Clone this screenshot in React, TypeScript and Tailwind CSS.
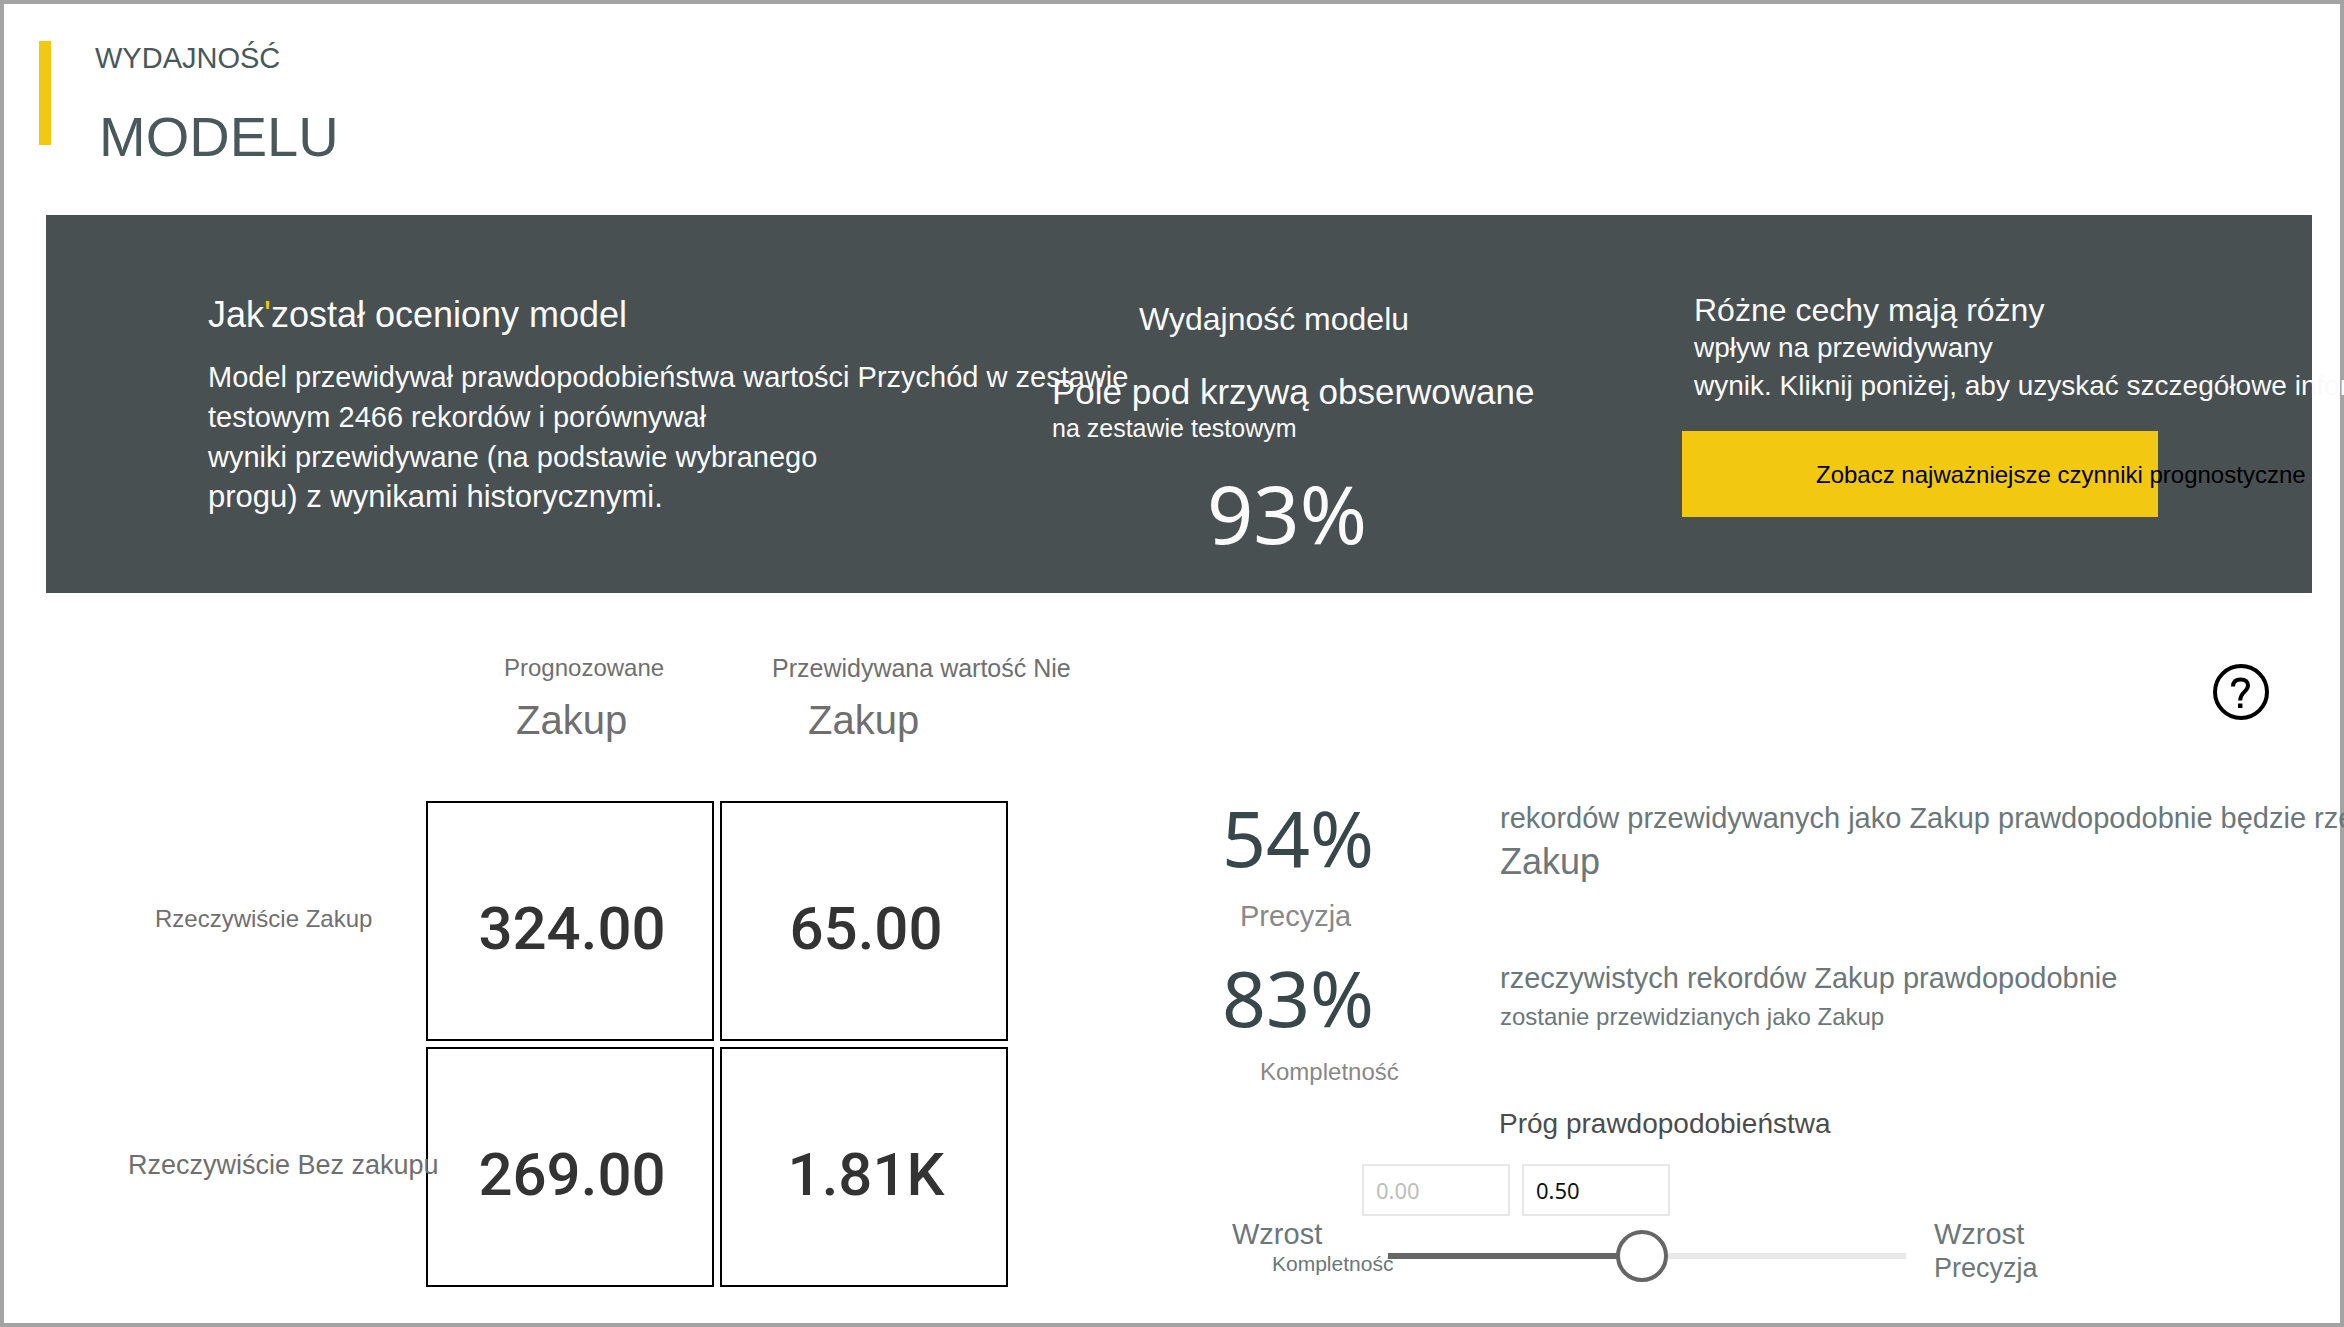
import { useState } from "react";

const matrix = [
  {
    label: "Rzeczywiście Zakup",
    labelClass: "pl-[103px] text-[24px]",
    values: ["324.00", "65.00"],
  },
  {
    label: "Rzeczywiście Bez zakupu",
    labelClass: "pl-[76px] text-[27px]",
    values: ["269.00", "1.81K"],
  },
];

function Header() {
  return (
    <header className="flex gap-11 pt-[37px] pl-[35px] text-[#48585b]">
      <div className="h-[104px] w-3 shrink-0 bg-[#f2c811]" />
      <h1>
        <span className="block text-[29px] leading-[34px]">WYDAJNOŚĆ</span>
        <span className="mt-[30px] block pl-1 text-[56px] leading-[64px]">MODELU</span>
      </h1>
    </header>
  );
}

function Banner() {
  return (
    <section className="mt-[46px] mr-7 ml-[42px] grid min-h-[378px] grid-cols-[minmax(0,1006fr)_minmax(0,630fr)_minmax(0,630fr)] bg-[#485052] whitespace-nowrap text-[#fafafa]">
      <div className="pt-[76px] pl-[162px]">
        <h2 className="text-[36px] leading-[48px]">
          Jak<span className="text-[#f2c811]">'</span>został oceniony model
        </h2>
        <p className="mt-[18px] text-[29px] leading-[40px]">
          Model przewidywał prawdopodobieństwa wartości Przychód w zestawie
          <br />
          testowym 2466 rekordów i porównywał
          <br />
          wyniki przewidywane (na podstawie wybranego
          <span className="block text-[31px]">progu) z wynikami historycznymi.</span>
        </p>
      </div>

      <div className="pt-20">
        <h2 className="pl-[87px] text-[32px] leading-[48px]">Wydajność modelu</h2>
        <p className="mt-[27px] text-[35px] leading-[44px]">Pole pod krzywą obserwowane</p>
        <p className="text-[25px] leading-[28px]">na zestawie testowym</p>
        <p className="mt-[31px] pl-[155px] font-['Noto_Sans',sans-serif] text-[81px] leading-[80px]">93%</p>
      </div>

      <div className="pt-[76px]">
        <p className="pl-3 text-[28px] leading-[38px]">
          <span className="block text-[32px]">Różne cechy mają różny</span>
          <span className="block">wpływ na przewidywany</span>
          wynik. Kliknij poniżej, aby uzyskać szczegółowe informacje
        </p>
        <button
          type="button"
          className="mt-[26px] block h-[86px] w-[476px] bg-[#f2c811] pt-[2px] pl-[134px] text-left text-[24px] text-black"
        >
          Zobacz najważniejsze czynniki prognostyczne
        </button>
      </div>
    </section>
  );
}

function ConfusionMatrix() {
  return (
    <table className="w-[968px] shrink-0 table-fixed border-separate border-spacing-[6px] text-left whitespace-nowrap text-[#6f6f6f]">
      <thead>
        <tr className="h-[196px] align-top">
          <td />
          <th scope="col" className="w-[288px] pt-[53px] pl-[78px] font-normal">
            <span className="block text-[24px] leading-[32px]">Prognozowane</span>
            <span className="mt-3 block pl-3 text-[40px] leading-[48px]">Zakup</span>
          </th>
          <th scope="col" className="w-[288px] pt-[53px] pl-[52px] font-normal">
            <span className="block text-[25px] leading-[32px]">Przewidywana wartość Nie</span>
            <span className="mt-3 block pl-9 text-[40px] leading-[48px]">Zakup</span>
          </th>
        </tr>
      </thead>
      <tbody>
        {matrix.map((row) => (
          <tr key={row.label} className="h-[240px]">
            <th scope="row" className={`pb-1 font-normal ${row.labelClass}`}>
              {row.label}
            </th>
            {row.values.map((value) => (
              <td
                key={value}
                className="border-2 border-black pt-4 pl-1 text-center font-['Roboto',sans-serif] text-[60px] leading-[72px] font-medium text-[#333]"
              >
                {value}
              </td>
            ))}
          </tr>
        ))}
      </tbody>
    </table>
  );
}

function Metrics() {
  return (
    <div className="mt-[78px] grid grid-cols-[278px_minmax(0,1fr)] gap-y-[22px] whitespace-nowrap text-[#6b7779]">
      <div className="text-[#8a8787]">
        <p className="font-['Noto_Sans',sans-serif] text-[77px] leading-[80px] text-[#37474a]">54%</p>
        <p className="mt-[18px] pl-[18px] text-[29px] leading-[40px]">Precyzja</p>
      </div>
      <div>
        <p className="text-[29px] leading-[40px]">
          rekordów przewidywanych jako Zakup prawdopodobnie będzie rzeczywiście
        </p>
        <p className="text-[36px] leading-[48px]">Zakup</p>
      </div>
      <div className="text-[#8a8787]">
        <p className="font-['Noto_Sans',sans-serif] text-[77px] leading-[80px] text-[#37474a]">83%</p>
        <p className="mt-[18px] pl-[38px] text-[24px] leading-[32px]">Kompletność</p>
      </div>
      <div>
        <p className="text-[29px] leading-[40px]">rzeczywistych rekordów Zakup prawdopodobnie</p>
        <p className="text-[24px] leading-[38px]">zostanie przewidzianych jako Zakup</p>
      </div>
    </div>
  );
}

function Threshold() {
  const [value, setValue] = useState("0.50");
  return (
    <div className="mt-4 whitespace-nowrap text-[#6b7779]">
      <label htmlFor="threshold" className="block pl-[277px] text-[28px] leading-[40px] text-[#4c4c4c]">
        Próg prawdopodobieństwa
      </label>
      <div className="mt-5 flex gap-3 pl-[140px] font-['Noto_Sans',sans-serif] text-[22px]">
        <input
          type="text"
          aria-label="Minimum"
          defaultValue="0.00"
          disabled
          className="h-[52px] w-[148px] border-2 border-[#e8e8e8] bg-white px-3 text-[#bdbdbd]"
        />
        <input
          id="threshold"
          type="text"
          value={value}
          onChange={(e) => setValue(e.target.value)}
          className="h-[52px] w-[148px] border-2 border-[#e8e8e8] bg-white px-3 text-[#111]"
        />
      </div>
      <div className="flex items-start">
        <p className="w-[166px] pl-[10px]">
          <span className="block text-[29px] leading-[36px]">Wzrost</span>
          <span className="block pl-10 text-[21px] leading-[24px]">Kompletność</span>
        </p>
        <input
          type="range"
          aria-label="Próg prawdopodobieństwa"
          min={0}
          max={100}
          defaultValue={49}
          className="mt-[14px] h-[52px] w-[518px] appearance-none bg-transparent [&::-webkit-slider-runnable-track]:h-1.5 [&::-webkit-slider-runnable-track]:bg-[linear-gradient(to_right,#666_49%,#e8e8e8_49%)] [&::-webkit-slider-thumb]:mt-[-23px] [&::-webkit-slider-thumb]:size-[52px] [&::-webkit-slider-thumb]:appearance-none [&::-webkit-slider-thumb]:rounded-full [&::-webkit-slider-thumb]:border-4 [&::-webkit-slider-thumb]:border-solid [&::-webkit-slider-thumb]:border-[#666] [&::-webkit-slider-thumb]:bg-white"
        />
        <p className="pl-7">
          <span className="block text-[29px] leading-[36px]">Wzrost</span>
          <span className="block text-[27px] leading-[32px]">Precyzja</span>
        </p>
      </div>
    </div>
  );
}

export default function App() {
  return (
    <div className="overflow-hidden">
      <main className="min-h-screen border-4 border-[#a3a3a3] bg-white font-['Liberation_Sans',Arial,sans-serif]">
        <Header />
        <Banner />
        <section className="mr-7 ml-[42px] flex">
          <ConfusionMatrix />
          <div className="min-w-0 flex-1 pl-[208px]">
            <button type="button" aria-label="Pomoc" className="mt-[71px] mr-[43px] ml-auto block size-14">
              <svg viewBox="0 0 56 56" className="size-14" fill="none" stroke="#000">
                <circle cx="28" cy="28" r="26" strokeWidth="4" />
                <path d="M20 22.5C20 17.5 23.2 15.4 27.8 15.4C32.4 15.4 35 17.8 35 21.6C35 27.6 27.2 28 27.2 36.5" strokeWidth="4" />
                <path d="M27.2 39.5V44" strokeWidth="4.4" />
              </svg>
            </button>
            <Metrics />
            <Threshold />
          </div>
        </section>
      </main>
    </div>
  );
}
